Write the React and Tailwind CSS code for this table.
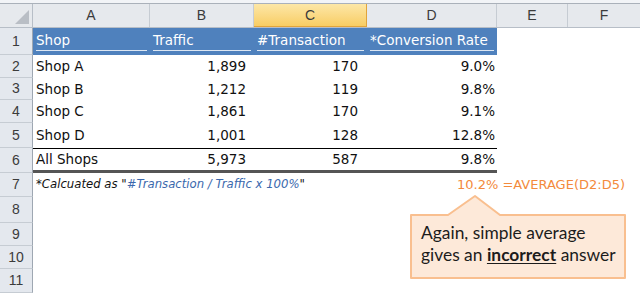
const cols = [
  { key: "A", w: "w-[117px]" },
  { key: "B", w: "w-[104px]" },
  { key: "C", w: "w-[113px]" },
  { key: "D", w: "w-[130px]" },
  { key: "E", w: "w-[71px]" },
];

const shops = [
  { n: 2, h: "h-[23px]", shop: "Shop A", traffic: "1,899", tx: "170", rate: "9.0%" },
  { n: 3, h: "h-[22px]", shop: "Shop B", traffic: "1,212", tx: "119", rate: "9.8%" },
  { n: 4, h: "h-[23px]", shop: "Shop C", traffic: "1,861", tx: "170", rate: "9.1%" },
  { n: 5, h: "h-[25px]", shop: "Shop D", traffic: "1,001", tx: "128", rate: "12.8%" },
];

const emptyRows = [
  { n: 8, h: "h-[26px]" },
  { n: 9, h: "h-[23px]" },
  { n: 10, h: "h-[23px]" },
  { n: 11, h: "h-[24px]" },
];

function RowNum({ n }) {
  return (
    <div className="w-[33px] shrink-0 h-full bg-[#e4e8ee] border-r border-b border-r-[#9ea7b2] border-b-[#c6ccd3] flex items-center justify-center text-[14px] text-[#3b3b3b] font-['Liberation_Sans',sans-serif]">
      {n}
    </div>
  );
}

function DataRow({ r }) {
  return (
    <div className={`flex ${r.h}`}>
      <RowNum n={r.n} />
      <div className="w-[117px] pl-[3px] flex items-center">{r.shop}</div>
      <div className="w-[104px] pr-[8px] flex items-center justify-end">{r.traffic}</div>
      <div className="w-[113px] pr-[9px] flex items-center justify-end">{r.tx}</div>
      <div className="w-[130px] pr-[2px] flex items-center justify-end">{r.rate}</div>
    </div>
  );
}

export default function App() {
  return (
    <div className="relative w-[640px] h-[295px] overflow-hidden bg-white text-[13.5px] text-[#111] font-['DejaVu_Sans',sans-serif]">
      {/* ribbon edge */}
      <div className="h-[4px] bg-[#f2f4f7] border-b border-[#aab1ba]" />

      {/* column letters */}
      <div className="flex h-[24px] bg-[#e6e9ed] border-b border-[#b7bec7] text-[14px] text-[#3b3b3b] font-['Liberation_Sans',sans-serif]">
        <div className="relative w-[33px] shrink-0 border-r border-[#b7bec7]">
          <svg className="absolute right-[3px] bottom-[3px]" width="14" height="14" viewBox="0 0 14 14">
            <polygon points="14,0 14,14 0,14" fill="#b9bec5" />
          </svg>
        </div>
        {cols.map((c) =>
          c.key === "C" ? (
            <div key={c.key} className={`${c.w} shrink-0 flex items-center justify-center bg-gradient-to-b from-[#fde7a6] to-[#f8cd63] border-r border-b border-[#e1a43b]`}>
              {c.key}
            </div>
          ) : (
            <div key={c.key} className={`${c.w} shrink-0 flex items-center justify-center border-r border-[#c6ccd3]`}>
              {c.key}
            </div>
          )
        )}
        <div className="flex-1 flex items-center justify-center">F</div>
      </div>

      {/* table header */}
      <div className="flex h-[27px]">
        <RowNum n={1} />
        <div className="flex bg-[#4f81bd] text-white">
          <div className="w-[117px] px-[3px] pt-[3px]">
            <div className="h-[20px] border-b border-[#dce6f2] leading-[18px]">Shop</div>
          </div>
          <div className="w-[104px] px-[3px] pt-[3px]">
            <div className="h-[20px] border-b border-[#dce6f2] leading-[18px]">Traffic</div>
          </div>
          <div className="w-[113px] px-[3px] pt-[3px]">
            <div className="h-[20px] border-b border-[#dce6f2] leading-[18px]">#Transaction</div>
          </div>
          <div className="w-[130px] px-[3px] pt-[3px]">
            <div className="h-[20px] border-b border-[#dce6f2] leading-[18px]">*Conversion Rate</div>
          </div>
        </div>
      </div>

      {shops.map((r) => (
        <DataRow key={r.n} r={r} />
      ))}

      {/* totals */}
      <div className="flex h-[25px]">
        <RowNum n={6} />
        <div className="flex border-t border-b-[3px] border-t-black border-b-[#555] border-b-double">
          <div className="w-[117px] pl-[3px] flex items-center">All Shops</div>
          <div className="w-[104px] pr-[8px] flex items-center justify-end">5,973</div>
          <div className="w-[113px] pr-[9px] flex items-center justify-end">587</div>
          <div className="w-[130px] pr-[2px] flex items-center justify-end">9.8%</div>
        </div>
      </div>

      {/* footnote and formula */}
      <div className="flex h-[24px]">
        <RowNum n={7} />
        <div className="flex-1 flex items-center pl-[3px] text-[11.7px] italic">
          *Calcuated as "<span className="text-[#3a68ad]">#Transaction / Traffic x 100%</span>"
        </div>
        <div className="pr-[15px] flex items-center text-[13px] text-[#f38a3c]">10.2% =AVERAGE(D2:D5)</div>
      </div>

      {emptyRows.map((r) => (
        <div key={r.n} className={`flex ${r.h}`}>
          <RowNum n={r.n} />
        </div>
      ))}

      {/* callout */}
      <div className="absolute left-[409px] top-[194px] w-[218px] h-[86px]">
        <svg className="absolute inset-0" width="218" height="86" viewBox="0 0 218 86">
          <path
            d="M2 21 L39 21 L66 2 L91 21 L216 21 L216 84 L2 84 Z"
            fill="#fde9d9"
            stroke="#f9bf8f"
            strokeWidth="2"
            strokeLinejoin="round"
          />
        </svg>
        <div className="absolute left-[12px] top-[28px] text-[17.4px] leading-[22px] text-[#1c1c1c] font-['Lato',sans-serif]">
          <div>Again, simple average</div>
          <div>
            gives an <span className="font-bold underline underline-offset-2">incorrect</span> answer
          </div>
        </div>
      </div>
    </div>
  );
}
